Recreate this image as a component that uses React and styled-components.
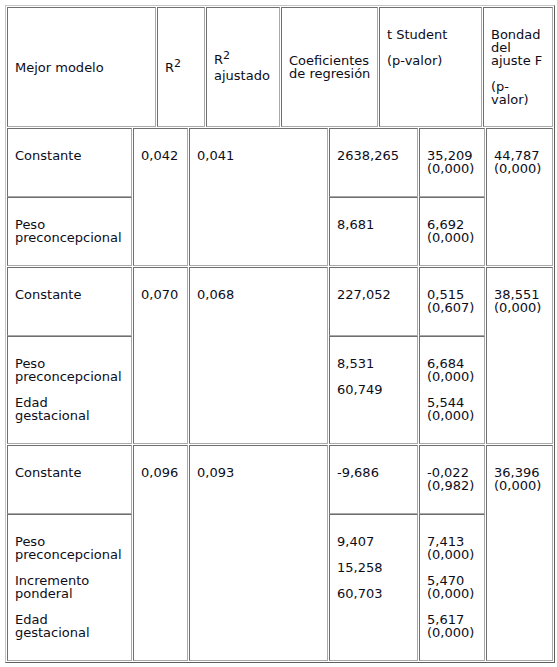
import React from 'react';
import styled, { createGlobalStyle, css } from 'styled-components';

const GlobalStyle = createGlobalStyle`
  body {
    margin: 0;
    background: #fff;
  }
`;

const cellBorder = css`
  border-style: solid;
  border-width: 1px;
  border-color: #6f6f6f #a9a9a9 #a9a9a9 #6f6f6f;
`;

const Frame = styled.div`
  box-sizing: border-box;
  width: 550px;
  margin: 5px;
  padding: 1px;
  display: flex;
  flex-direction: column;
  gap: 1px;
  border-style: solid;
  border-width: 1px;
  border-color: #c4c4c4 #5e5e5e #5e5e5e #c4c4c4;
  font-family: "DejaVu Sans", Verdana, sans-serif;
  font-size: 13px;
  line-height: 13px;
  color: #0d0d1a;
`;

const HeaderRow = styled.div`
  display: grid;
  grid-template-columns: 149px 48px 74px 97px 103px 70px;
  gap: 1px;
`;

const HeadCell = styled.div`
  ${cellBorder}
  display: flex;
  align-items: ${(p) => (p.$top ? 'flex-start' : 'center')};
  padding: 7px;
  white-space: ${(p) => (p.$pre ? 'pre' : 'normal')};
`;

const SubLine = styled.div`
  margin-top: 3px;
`;

const Block = styled.div`
  display: grid;
  grid-template-columns: 125px 55px 139px 89px 66px 67px;
  column-gap: 1px;
  row-gap: 0;
`;

const Cell = styled.div`
  ${cellBorder}
  padding: 7px 7px 8px;
  grid-row: ${(p) => (p.$span ? `span ${p.$span}` : 'auto')};
`;

const Para = styled.p`
  margin: 13px 0;
`;

const Sup = styled.sup`
  font-size: 11px;
  line-height: 0;
  vertical-align: 5px;
`;

const blocks = [
  {
    r2: '0,042',
    adj: '0,041',
    f: '44,787 (0,000)',
    constant: { coef: '2638,265', t: '35,209 (0,000)' },
    vars: [{ name: 'Peso preconcepcional', coef: '8,681', t: '6,692 (0,000)' }],
  },
  {
    r2: '0,070',
    adj: '0,068',
    f: '38,551 (0,000)',
    constant: { coef: '227,052', t: '0,515 (0,607)' },
    vars: [
      { name: 'Peso preconcepcional', coef: '8,531', t: '6,684 (0,000)' },
      { name: 'Edad gestacional', coef: '60,749', t: '5,544 (0,000)' },
    ],
  },
  {
    r2: '0,096',
    adj: '0,093',
    f: '36,396 (0,000)',
    constant: { coef: '-9,686', t: '-0,022 (0,982)' },
    vars: [
      { name: 'Peso preconcepcional', coef: '9,407', t: '7,413 (0,000)' },
      { name: 'Incremento ponderal', coef: '15,258', t: '5,470 (0,000)' },
      { name: 'Edad gestacional', coef: '60,703', t: '5,617 (0,000)' },
    ],
  },
];

export default function App() {
  return (
    <>
      <GlobalStyle />
      <Frame>
        <HeaderRow>
          <HeadCell>
            <div>Mejor modelo</div>
          </HeadCell>
          <HeadCell>
            <div>
              R<Sup>2</Sup>
            </div>
          </HeadCell>
          <HeadCell>
            <div>
              <div>
                R<Sup>2</Sup>
              </div>
              <SubLine>ajustado</SubLine>
            </div>
          </HeadCell>
          <HeadCell $pre>
            <div>{'Coeficientes\nde regresión'}</div>
          </HeadCell>
          <HeadCell $top>
            <div>
              <Para>t Student</Para>
              <Para>(p-valor)</Para>
            </div>
          </HeadCell>
          <HeadCell>
            <div>
              <Para>Bondad del ajuste F</Para>
              <Para>(p-valor)</Para>
            </div>
          </HeadCell>
        </HeaderRow>

        {blocks.map((b, i) => (
          <Block key={i}>
            <Cell>
              <Para>Constante</Para>
            </Cell>
            <Cell $span={2}>
              <Para>{b.r2}</Para>
            </Cell>
            <Cell $span={2}>
              <Para>{b.adj}</Para>
            </Cell>
            <Cell>
              <Para>{b.constant.coef}</Para>
            </Cell>
            <Cell>
              <Para>{b.constant.t}</Para>
            </Cell>
            <Cell $span={2}>
              <Para>{b.f}</Para>
            </Cell>

            <Cell>
              {b.vars.map((v) => (
                <Para key={v.name}>{v.name}</Para>
              ))}
            </Cell>
            <Cell>
              {b.vars.map((v) => (
                <Para key={v.name}>{v.coef}</Para>
              ))}
            </Cell>
            <Cell>
              {b.vars.map((v) => (
                <Para key={v.name}>{v.t}</Para>
              ))}
            </Cell>
          </Block>
        ))}
      </Frame>
    </>
  );
}
